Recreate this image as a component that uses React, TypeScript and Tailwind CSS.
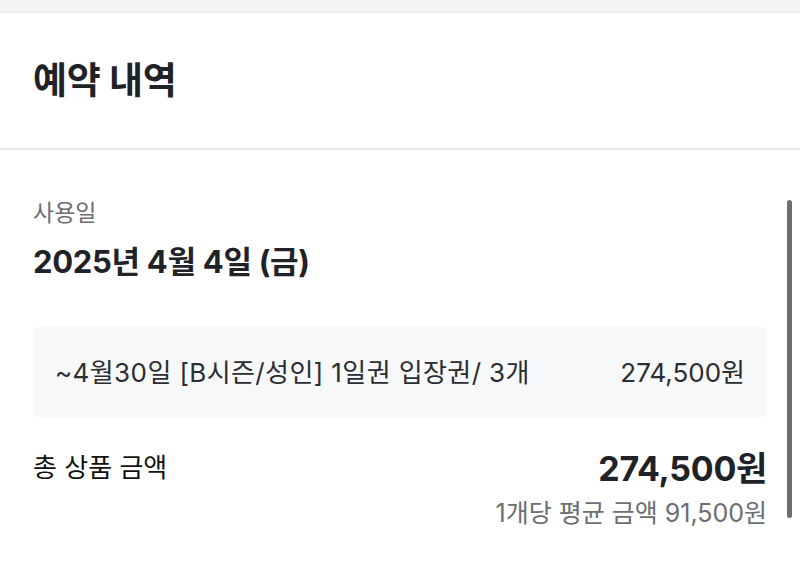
import React from "react";

export default function App() {
  return (
    <div
      className="relative w-[800px] h-[561px] overflow-hidden bg-white text-[#1f2227]"
      style={{ fontFamily: 'Inter, "Noto Sans CJK KR", "Noto Sans", sans-serif' }}
    >
      <div className="h-[13px] bg-[#f2f4f6] border-b border-[#e9ebee]" />
      <header className="h-[137px] flex items-center px-[33px] border-b-2 border-[#e6e7e9]">
        <h1 className="text-[37px] font-bold tracking-[-0.3px] leading-none">예약 내역</h1>
      </header>
      <main className="px-[33px] w-[800px]">
        <div className="pt-[48px] text-[23px] leading-[30px] text-[#6b6e73]">사용일</div>
        <div className="mt-[14px] text-[31px] font-bold leading-[40px] tracking-[-0.3px]">
          2025년 4월 4일 (금)
        </div>
        <div className="mt-[44px] h-[92px] rounded-[8px] bg-[#f7f8fa] flex items-center justify-between px-[22px] text-[26px] text-[#2b2d31] tracking-[0.4px]">
          <span>~4월30일 [B시즌/성인] 1일권 입장권/ 3개</span>
          <span className="tracking-[0px]">274,500원</span>
        </div>
        <div className="mt-[32px] flex justify-between items-start">
          <span className="text-[26px] leading-[36px] text-[#111]">총 상품 금액</span>
          <div className="flex flex-col items-end">
            <span className="text-[34px] font-bold leading-[38px] tracking-[-0.3px]">274,500원</span>
            <span className="mt-[10px] text-[25px] leading-[30px] text-[#6b6e73]">
              1개당 평균 금액 91,500원
            </span>
          </div>
        </div>
      </main>
      <div className="absolute left-[787px] top-[200px] w-[5px] h-[318px] rounded-full bg-[#6e6e6e]" />
    </div>
  );
}
